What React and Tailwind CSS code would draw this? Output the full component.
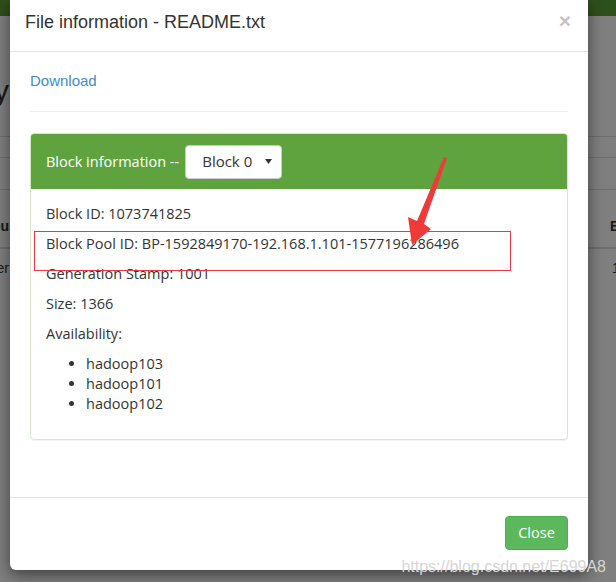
import React from 'react';

const hosts = ['hadoop103', 'hadoop101', 'hadoop102'];

const BackgroundPage = () => (
  <div className="w-full h-full bg-white text-[#333] font-['Liberation_Sans',Arial,sans-serif]">
    <div className="h-[16px] bg-[#5a9e39]"></div>
    <div className="h-[121px] pt-[58px] border-b border-[#dddddd]">
      <div className="flex w-[9px] justify-end">
        <h1 className="whitespace-nowrap text-[30px] leading-[34px]">Browse Directory</h1>
      </div>
    </div>
    <div className="h-[21px] border-b border-[#dddddd]"></div>
    <div className="h-[32px] border-b border-[#dddddd]"></div>
    <div className="h-[59px] flex justify-between items-end pb-[10px] border-b-2 border-[#dddddd] text-[14px] font-bold overflow-hidden">
      <div className="flex w-[9px] justify-end"><span className="whitespace-nowrap">Grou</span></div>
      <span className="whitespace-nowrap pl-[610px] absolute">Block Size</span>
    </div>
    <div className="h-[38px] flex items-center text-[14px] overflow-hidden">
      <div className="flex w-[9px] justify-end"><span className="whitespace-nowrap">supergroup user</span></div>
      <span className="ml-[603px] whitespace-nowrap">128 MB</span>
    </div>
  </div>
);

const App = () => {
  return (
    <div className="relative w-[616px] h-[582px] overflow-hidden">
      <BackgroundPage />
      <div className="absolute inset-0 bg-black/50"></div>

      {/* modal */}
      <div className="absolute left-[10px] top-0 w-[578px] h-[570px] flex flex-col bg-white rounded-b-[6px] shadow-[0_5px_15px_rgba(0,0,0,0.5)] text-[#333] font-['Open_Sans','Noto_Sans',sans-serif]">
        <div className="h-[52px] flex justify-between items-start pt-[9px] pl-[15px] pr-[17px] border-b border-[#e5e5e5]">
          <h4 className="text-[18px] leading-[26px] font-['Liberation_Sans',Arial,sans-serif]">File information - README.txt</h4>
          <button className="text-[21px] leading-[24px] font-bold text-[#c4c4c4] font-['Liberation_Sans',Arial,sans-serif]">×</button>
        </div>

        <div className="flex-1 pt-[19px] px-[20px]">
          <a href="#" className="block text-[15px] leading-[20px] text-[#428bca] font-['Liberation_Sans',Arial,sans-serif]">Download</a>
          <div className="mt-[20px] mb-[21px] border-t border-[#eeeeee]"></div>

          <div className="border border-[#d6e9c6] rounded-[4px] shadow-[0_1px_1px_rgba(0,0,0,0.05)]">
            <div className="h-[55px] flex items-center gap-[6px] px-[15px] bg-[#5fa33e] rounded-t-[3px] text-white">
              <span className="text-[14.5px]">Block information --</span>
              <div className="w-[97px] h-[34px] flex items-center justify-between pl-[16px] pr-[9px] bg-white border border-[#cccccc] rounded-[4px] text-[#333] text-[15px]">
                <span>Block 0</span>
                <svg width="7" height="5" viewBox="0 0 7 5"><path d="M0 0h7L3.5 5z" fill="#333" /></svg>
              </div>
            </div>
            <div className="p-[15px] text-[14.5px] leading-[20px]">
              <p className="mb-[10px]">Block ID: 1073741825</p>
              <p className="mb-[10px]">Block Pool ID: BP-1592849170-192.168.1.101-1577196286496</p>
              <p className="mb-[10px]">Generation Stamp: 1001</p>
              <p className="mb-[10px]">Size: 1366</p>
              <p className="mb-[10px]">Availability:</p>
              <ul className="mb-[10px] pl-[40px] list-disc">
                {hosts.map((h) => (
                  <li key={h}>{h}</li>
                ))}
              </ul>
            </div>
          </div>
        </div>

        <div className="h-[73px] flex justify-end items-start pt-[18px] pr-[20px] border-t border-[#e5e5e5]">
          <button className="w-[63px] h-[34px] bg-[#5cb85c] border border-[#4cae4c] rounded-[4px] text-white text-[14.5px]">Close</button>
        </div>
      </div>

      {/* annotation */}
      <div className="absolute left-[34px] top-[231px] w-[477px] h-[40px] border border-[#e53b3b]"></div>
      <svg className="absolute left-0 top-0" width="616" height="582" viewBox="0 0 616 582">
        <polygon points="444,157 447,158 424,224 431,229 412,245 408,217 417,221" fill="#f03a3a" />
      </svg>

      <div className="absolute right-[10px] bottom-[3px] text-[16px] text-[#d6d6d6] font-['Liberation_Sans',Arial,sans-serif]">https://blog.csdn.net/E699A8</div>
    </div>
  );
};

export default App;
